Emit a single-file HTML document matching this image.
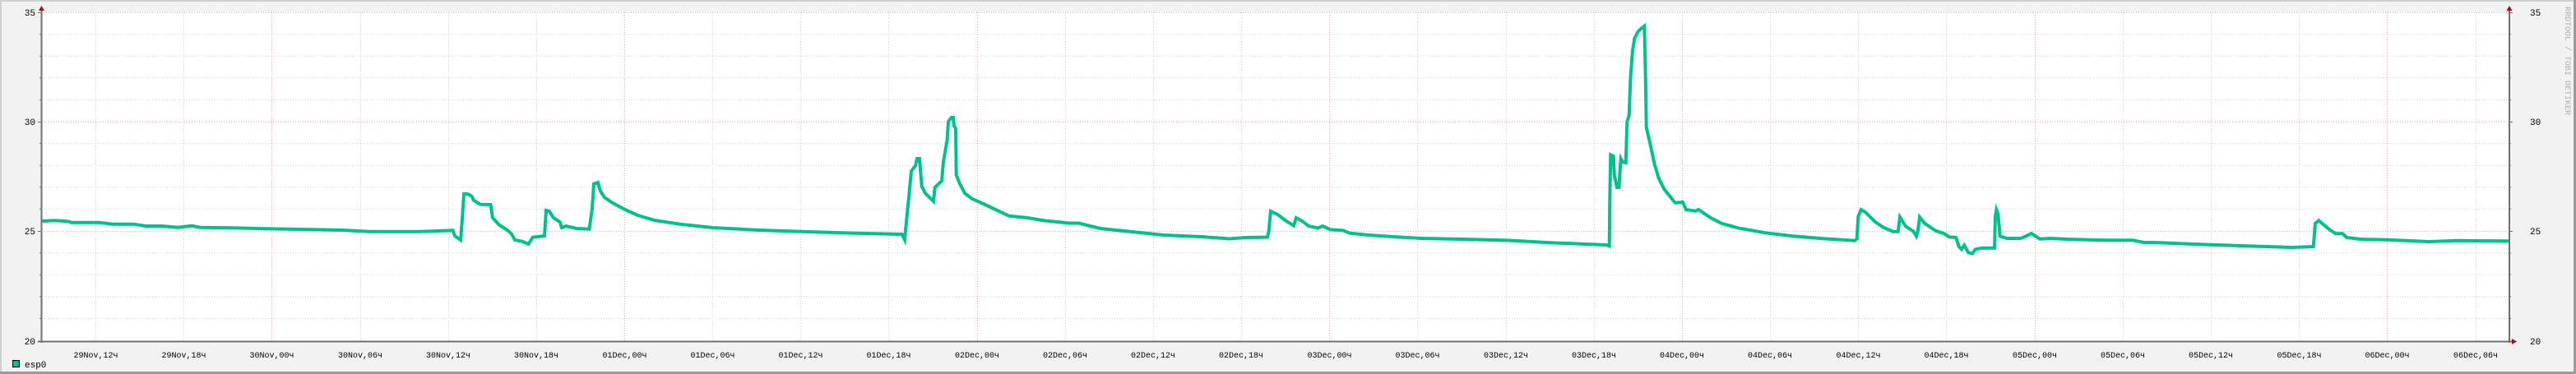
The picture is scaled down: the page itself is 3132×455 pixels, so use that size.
<!DOCTYPE html>
<html><head><meta charset="utf-8"><style>
html,body{margin:0;padding:0;background:#f2f2f2}
svg{display:block}
text{font-family:"Liberation Mono","DejaVu Sans Mono",monospace;}
</style></head><body>
<svg width="3132" height="455" xmlns="http://www.w3.org/2000/svg">
<rect x="0" y="0" width="3132" height="455" fill="#f2f2f2"/>
<rect x="0" y="0" width="3132" height="2" fill="#d0d0d0"/>
<rect x="0" y="0" width="2" height="455" fill="#d0d0d0"/>
<rect x="0" y="452" width="3132" height="3" fill="#9a9a9a"/>
<rect x="3129" y="0" width="3" height="455" fill="#9a9a9a"/>
<rect x="50" y="15" width="3001" height="400" fill="#fff"/>
<g stroke="#d0d0d0" stroke-width="1" stroke-dasharray="1,2">
<path d="M50,41.6H3051M50,68.2H3051M50,94.8H3051M50,121.4H3051M50,174.6H3051M50,201.2H3051M50,227.8H3051M50,254.4H3051M50,307.6H3051M50,334.2H3051M50,360.8H3051M50,387.4H3051"/>
<path d="M116.5,15V415M223.5,15V415M438.5,15V415M545.5,15V415M652.5,15V415M866.5,15V415M973.5,15V415M1080.5,15V415M1295.5,15V415M1402.5,15V415M1509.5,15V415M1723.5,15V415M1831.5,15V415M1938.5,15V415M2152.5,15V415M2259.5,15V415M2366.5,15V415M2581.5,15V415M2688.5,15V415M2795.5,15V415M3010.5,15V415"/>
</g>
<g stroke="#e8a8a8" stroke-width="1" stroke-dasharray="1,2">
<path d="M50,15.5H3051M50,148.5H3051M50,281.5H3051"/>
<path d="M330.5,15V415M759.5,15V415M1188.5,15V415M1616.5,15V415M2045.5,15V415M2474.5,15V415M2902.5,15V415"/>
</g>
<polyline fill="none" stroke="#00c08e" stroke-width="4" stroke-linejoin="miter" points="
50,269 66.7,268.3 83,269.3 86.7,270.7 120,270.7 136.7,272.7 163,272.7 176.7,275 196.7,275 216.7,276.7 233.3,274.7 243.3,276.7 283.3,277.3 323.3,278.3 366.7,279 416.7,280 450,281.7 510,281.7
550.7,280.3 553,287 560,292 562,267 564,236 568.5,236 573.6,238.7 576,243.7 584,248.7 596.6,249 599,265 607,273.7 617,280 622,284.7 626,292 635,293.7 642.5,297 647.7,288.7 662,287 664,256 668,257 673,265 680.8,270 683,277 688,275 701,278 716.5,278.7 720,253.7 722,223.7 727,222 729.8,232 734.8,240 745,247 760,255 775.6,262 796,268 826.6,272.7 867,277 923,280 984,282 1040,283.7 1096.7,285
1100,291.7 1101.7,273 1105,240 1108,208 1113,201.7 1115,193 1118,193 1120.7,226.7 1125,235 1135,245 1136.7,228 1145,220 1147,196.7 1151.7,170 1153,148 1156.7,143 1159,143 1160,153 1162,156.7 1162.7,213 1166.7,223 1173,235 1181.7,241.7 1200,250 1226.7,262.7 1250,265 1266.7,268 1300,271.5
1311.5,271.5 1338,278 1376.6,282 1415,286 1461,288 1495,290.5 1514.6,289 1541,288.5 1542.5,282 1545,257 1553,260.7 1564,269 1573,274.5 1576,265 1583.5,269 1591,275 1602.7,277.4 1608,275 1618,279.4 1633,280.3 1641,283.6 1664,286 1702,288.5 1729,290 1779,291 1836,292.5 1880,295
1953,298 1956.7,299.3 1957.3,241.7 1958.3,188.3 1961.7,190 1962.7,213 1966,228 1968.3,228 1970.7,193 1972.7,196.7 1976.7,198 1978.3,148.3 1980.7,140 1982.7,90 1985,61.7 1987.3,46.7 1991.7,38.3 1995,35 1999.3,31.7 2000.7,93.3 2001.7,155 2006.7,176.7 2011.7,200 2016.7,216.7 2023.3,230 2036.7,246.7 2046,246 2050,255 2061.7,256.7 2065,255 2080,265 2093,271.7 2113,277.3 2146.7,283.3 2180,287.3
2213,290 2255,292.7 2257.7,290.7 2259.3,263.3 2262.7,255 2268.3,258.3 2280,270 2290,276.7 2301.7,281.7 2307.7,281.7 2310,264 2316.7,275 2326.7,281.7 2330,287.3 2331.7,281.7 2334,264 2340,271.7 2353.3,280.7 2363.3,284 2370,288.3 2378.3,289 2381.7,300 2385,303.3 2388.3,298.3 2393.3,307.3 2398.3,308.3 2401.7,303.3 2410,301.7 2425,301.7 2426,263.3 2427.3,255 2429.3,260 2431.7,287.3 2440,290 2456.7,290 2463.3,287.3 2470,284 2480,290.7 2493.3,290 2513.3,291 2563.3,292.3 2593.3,292.3 2606.7,295 2620,295
2686.7,297.7 2786.7,301 2812.7,300 2815,271.7 2819.3,268.3 2825,273.3 2833.3,280 2840,284.3 2848.3,284.3 2853.3,289 2870,291 2903,291.7 2953,294 2986.7,292.7 3050,293.3"/>
<g stroke="#707070" stroke-width="2" fill="none">
<path d="M50.5,10V417M3051,10V417M46,415.5H3056"/>
</g>
<g stroke="#707070" stroke-width="1">
<path d="M46,15.5H50M46,148.5H50M46,281.5H50M48,41.6H50M48,68.2H50M48,94.8H50M48,121.4H50M48,174.6H50M48,201.2H50M48,227.8H50M48,254.4H50M48,307.6H50M48,334.2H50M48,360.8H50M48,387.4H50"/>
<path d="M3051,15.5H3055M3051,148.5H3055M3051,281.5H3055M3051,41.6H3053M3051,68.2H3053M3051,94.8H3053M3051,121.4H3053M3051,174.6H3053M3051,201.2H3053M3051,227.8H3053M3051,254.4H3053M3051,307.6H3053M3051,334.2H3053M3051,360.8H3053M3051,387.4H3053"/>
</g>
<g fill="#a01010">
<path d="M47,13L50.5,7L54,13Z"/>
<path d="M3047.5,13L3051,7L3054.5,13Z"/>
<path d="M3054,412L3060,415.5L3054,419Z"/>
</g>
<g font-size="11" fill="#000">
<text x="43" y="19" text-anchor="end">35</text>
<text x="43" y="152" text-anchor="end">30</text>
<text x="43" y="285" text-anchor="end">25</text>
<text x="43" y="419" text-anchor="end">20</text>
<text x="3076" y="19">35</text>
<text x="3076" y="152">30</text>
<text x="3076" y="285">25</text>
<text x="3076" y="419">20</text>
</g>
<g font-size="10" fill="#000" text-anchor="middle">
<text x="116.5" y="435">29Nov,12ч</text><text x="223.5" y="435">29Nov,18ч</text>
<text x="330.5" y="435">30Nov,00ч</text><text x="438" y="435">30Nov,06ч</text><text x="545" y="435">30Nov,12ч</text><text x="652" y="435">30Nov,18ч</text>
<text x="759.5" y="435">01Dec,00ч</text><text x="866.5" y="435">01Dec,06ч</text><text x="973.5" y="435">01Dec,12ч</text><text x="1080.5" y="435">01Dec,18ч</text>
<text x="1188" y="435">02Dec,00ч</text><text x="1295" y="435">02Dec,06ч</text><text x="1402" y="435">02Dec,12ч</text><text x="1509" y="435">02Dec,18ч</text>
<text x="1616.5" y="435">03Dec,00ч</text><text x="1723.5" y="435">03Dec,06ч</text><text x="1831" y="435">03Dec,12ч</text><text x="1938" y="435">03Dec,18ч</text>
<text x="2045" y="435">04Dec,00ч</text><text x="2152" y="435">04Dec,06ч</text><text x="2259.5" y="435">04Dec,12ч</text><text x="2366.5" y="435">04Dec,18ч</text>
<text x="2474" y="435">05Dec,00ч</text><text x="2581" y="435">05Dec,06ч</text><text x="2688" y="435">05Dec,12ч</text><text x="2795.5" y="435">05Dec,18ч</text>
<text x="2902.5" y="435">06Dec,00ч</text><text x="3010" y="435">06Dec,06ч</text>
</g>
<rect x="15.5" y="438.5" width="8" height="8" fill="#00c08e" stroke="#000" stroke-width="1"/>
<text x="30" y="447" font-size="11" fill="#000">esp0</text>
<text transform="translate(3119,8) rotate(90)" font-size="10" fill="#b0b0b0">RRDTOOL / TOBI OETIKER</text>
</svg>
</body></html>
